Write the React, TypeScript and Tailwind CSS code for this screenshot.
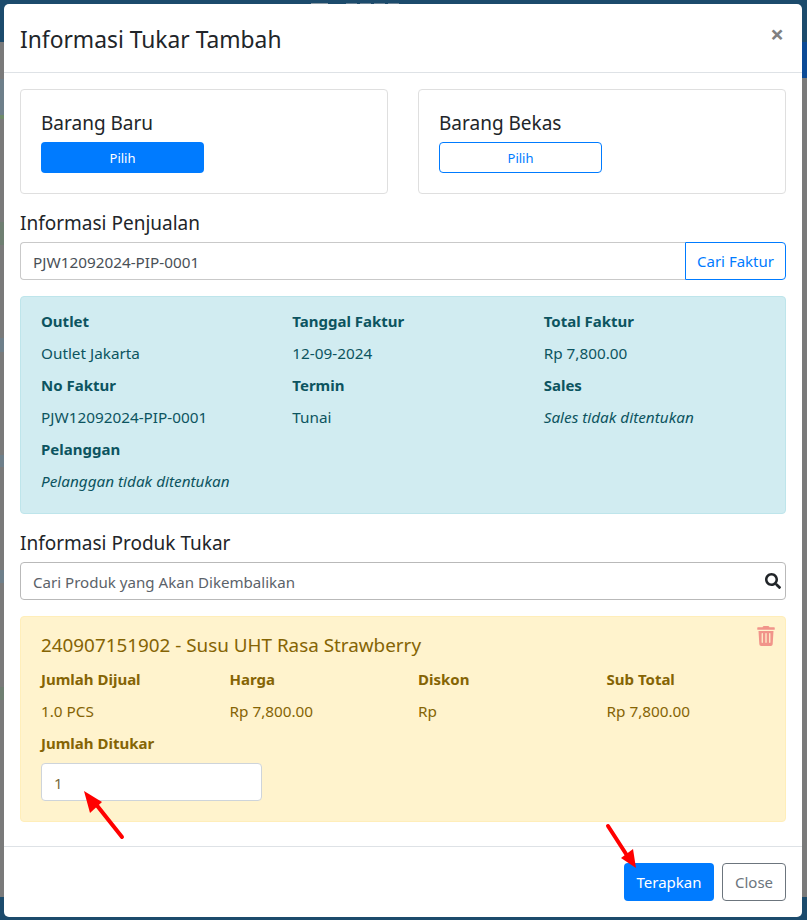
import React from "react";

function Field({ label, value, italic }: { label: string; value: string; italic?: boolean }) {
  return (
    <div>
      <div className="font-bold leading-6 text-[15px]">{label}</div>
      <div className={`mt-2 mb-2 leading-6 text-[15.3px] ${italic ? "italic" : ""}`}>{value}</div>
    </div>
  );
}

function Arrow({ className, x1, y1, x2, y2, head }: { className: string; x1: number; y1: number; x2: number; y2: number; head: string }) {
  return (
    <svg className={className} width="60" height="60" viewBox="0 0 60 60" fill="none">
      <line x1={x1} y1={y1} x2={x2} y2={y2} stroke="#ff0000" strokeWidth="4" strokeLinecap="round" />
      <polygon points={head} fill="#ff0000" />
    </svg>
  );
}

export default function App() {
  return (
    <div className="relative w-[807px] h-[920px] overflow-hidden bg-[#1c4b6c] font-['Noto_Sans','Open_Sans',sans-serif] text-[#212529] text-[15px]">
      <div className="absolute inset-0 flex justify-between" aria-hidden="true">
        <div className="w-1 flex flex-col bg-[#7a7a7a]">
          <div className="h-[42px] bg-[#1c4b6c]" />
          <div className="h-[37px]" />
          <div className="h-[36px] bg-[#6e7f8a]" />
          <div className="h-[4px] bg-[#6f8a6a]" />
          <div className="h-[103px]" />
          <div className="h-[23px] bg-[#6f7f72]" />
          <div className="h-[93px]" />
          <div className="h-[14px] bg-[#6e7f8a]" />
          <div className="h-[103px]" />
          <div className="h-[12px] bg-[#6e7f8a]" />
          <div className="h-[103px]" />
          <div className="h-[13px] bg-[#6e7f8a]" />
          <div className="h-[104px]" />
          <div className="h-[13px] bg-[#6f7f72]" />
          <div className="flex-1" />
          <div className="h-[23px] bg-[#1c4b6c]" />
        </div>
        <div className="flex-1 flex justify-center pt-[3px] gap-[3px] pr-[96px]">
          <div className="w-[17px] h-px bg-[#8a9aa5]" />
          <div className="w-[12px]" />
          <div className="w-[11px] h-px bg-[#6d8598]" />
          <div className="w-[11px] h-px bg-[#6d8598]" />
          <div className="w-[11px] h-px bg-[#6d8598]" />
          <div className="w-[11px] h-px bg-[#6d8598]" />
        </div>
        <div className="w-[5px] flex flex-col bg-[#7a7a7a]">
          <div className="h-[42px] bg-[#1c4b6c]" />
          <div className="h-[36px] bg-[#0b4a96]" />
          <div className="flex-1" />
          <div className="h-[23px] bg-[#1c4b6c]" />
        </div>
      </div>

      <div className="relative ml-1 mt-1 w-[798px] h-[913px] bg-white rounded-[5px] flex flex-col">
        <div className="h-[69px] border-b border-[#dee2e6] px-4 flex items-start justify-between">
          <h5 className="text-[22.8px] leading-[34px] mt-[19px] font-normal">Informasi Tukar Tambah</h5>
          <span className="text-[24px] font-bold text-[#808080] leading-none mt-[18px] mr-[2px]">×</span>
        </div>

        <div className="flex-1 px-4 pt-4">
          <div className="grid grid-cols-2 gap-[30px]">
            <div className="h-[105px] border border-[#dfdfdf] rounded px-5 pt-5">
              <div className="text-[19px] leading-[27px] mb-[5px]">Barang Baru</div>
              <button className="block w-[163px] h-[31px] pt-[2px] rounded bg-[#007bff] text-white text-[13px]">Pilih</button>
            </div>
            <div className="h-[105px] border border-[#dfdfdf] rounded px-5 pt-5">
              <div className="text-[19px] leading-[27px] mb-[5px]">Barang Bekas</div>
              <button className="block w-[163px] h-[31px] pt-[2px] rounded border border-[#007bff] text-[#007bff] text-[13px]">Pilih</button>
            </div>
          </div>

          <div className="text-[19px] leading-[27px] mt-[16px] mb-[5px]">Informasi Penjualan</div>
          <div className="flex h-[38px]">
            <div className="flex-1 border border-[#c9c9c9] border-r-0 rounded-l px-3 pt-[2px] flex items-center text-[#495057] text-[15.3px]">PJW12092024-PIP-0001</div>
            <button className="w-[101px] border border-[#007bff] rounded-r text-[#007bff] text-[15px]">Cari Faktur</button>
          </div>

          <div className="mt-4 h-[218px] bg-[#d1ecf1] border border-[#bee5eb] rounded px-5 pt-[12px] text-[#0c5460]">
            <div className="grid grid-cols-3 gap-x-[30px]">
              <Field label="Outlet" value="Outlet Jakarta" />
              <Field label="Tanggal Faktur" value="12-09-2024" />
              <Field label="Total Faktur" value="Rp 7,800.00" />
              <Field label="No Faktur" value="PJW12092024-PIP-0001" />
              <Field label="Termin" value="Tunai" />
              <Field label="Sales" value="Sales tidak ditentukan" italic />
              <Field label="Pelanggan" value="Pelanggan tidak ditentukan" italic />
            </div>
          </div>

          <div className="text-[19px] leading-[27px] mt-[16px] mb-[5px]">Informasi Produk Tukar</div>
          <div className="h-[38px] border border-[#b9b9b9] rounded pl-3 pr-1 flex items-center justify-between text-[#5b6269] text-[15.1px]">
            <span className="pt-[2px]">Cari Produk yang Akan Dikembalikan</span>
            <svg width="16" height="16" viewBox="0 0 512 512" fill="#212529"><path d="M505 442.7L405.3 343c-4.5-4.5-10.6-7-17-7H372c27.6-35.3 44-79.7 44-128C416 93.1 322.9 0 208 0S0 93.1 0 208s93.1 208 208 208c48.3 0 92.7-16.4 128-44v16.3c0 6.4 2.5 12.5 7 17l99.7 99.7c9.4 9.4 24.6 9.4 33.9 0l28.3-28.3c9.4-9.4 9.4-24.6.1-34zM208 336c-70.7 0-128-57.2-128-128 0-70.7 57.2-128 128-128 70.7 0 128 57.2 128 128 0 70.7-57.2 128-128 128z"/></svg>
          </div>

          <div className="relative mt-4 h-[206px] bg-[#fff3cd] border border-[#ffeeba] rounded px-5 pt-[15px] text-[#856404]">
            <svg className="absolute right-[10px] top-[9px]" width="18" height="20" viewBox="0 0 448 512" fill="#f1948a"><path d="M432 32H312l-9.4-18.7A24 24 0 0 0 281.1 0H166.8a23.72 23.72 0 0 0-21.4 13.3L136 32H16A16 16 0 0 0 0 48v32a16 16 0 0 0 16 16h416a16 16 0 0 0 16-16V48a16 16 0 0 0-16-16zM53.2 467a48 48 0 0 0 47.9 45h245.8a48 48 0 0 0 47.9-45L416 128H32zM304 192a16 16 0 0 1 32 0v224a16 16 0 0 1-32 0zm-96 0a16 16 0 0 1 32 0v224a16 16 0 0 1-32 0zm-96 0a16 16 0 0 1 32 0v224a16 16 0 0 1-32 0z"/></svg>
            <div className="text-[18.85px] leading-[27px] mb-[8px]">240907151902 - Susu UHT Rasa Strawberry</div>
            <div className="grid grid-cols-4 gap-x-[30px]">
              <Field label="Jumlah Dijual" value="1.0 PCS" />
              <Field label="Harga" value="Rp 7,800.00" />
              <Field label="Diskon" value="Rp" />
              <Field label="Sub Total" value="Rp 7,800.00" />
            </div>
            <div className="font-bold leading-6">Jumlah Ditukar</div>
            <div className="mt-2 w-[221px] h-[38px] bg-white border border-[#ced4da] rounded px-3 pt-[2px] flex items-center text-[#7a6a3a]">1</div>
          </div>
        </div>

        <div className="h-[71px] border-t border-[#dee2e6] px-4 flex items-start justify-end gap-2 pt-4">
          <button className="w-[90px] h-[38px] rounded bg-[#007bff] text-white text-[15px]">Terapkan</button>
          <button className="w-[64px] h-[38px] rounded border border-[#6c757d] text-[#6c757d] text-[15px]">Close</button>
        </div>
      </div>

      <Arrow className="absolute left-[75px] top-[785px]" x1={47} y1={52} x2={20} y2={18} head="9,6 27,17 15,28" />
      <Arrow className="absolute left-[595px] top-[815px]" x1={13} y1={11} x2={33} y2={42} head="41,53 26,43 38,34" />
    </div>
  );
}
